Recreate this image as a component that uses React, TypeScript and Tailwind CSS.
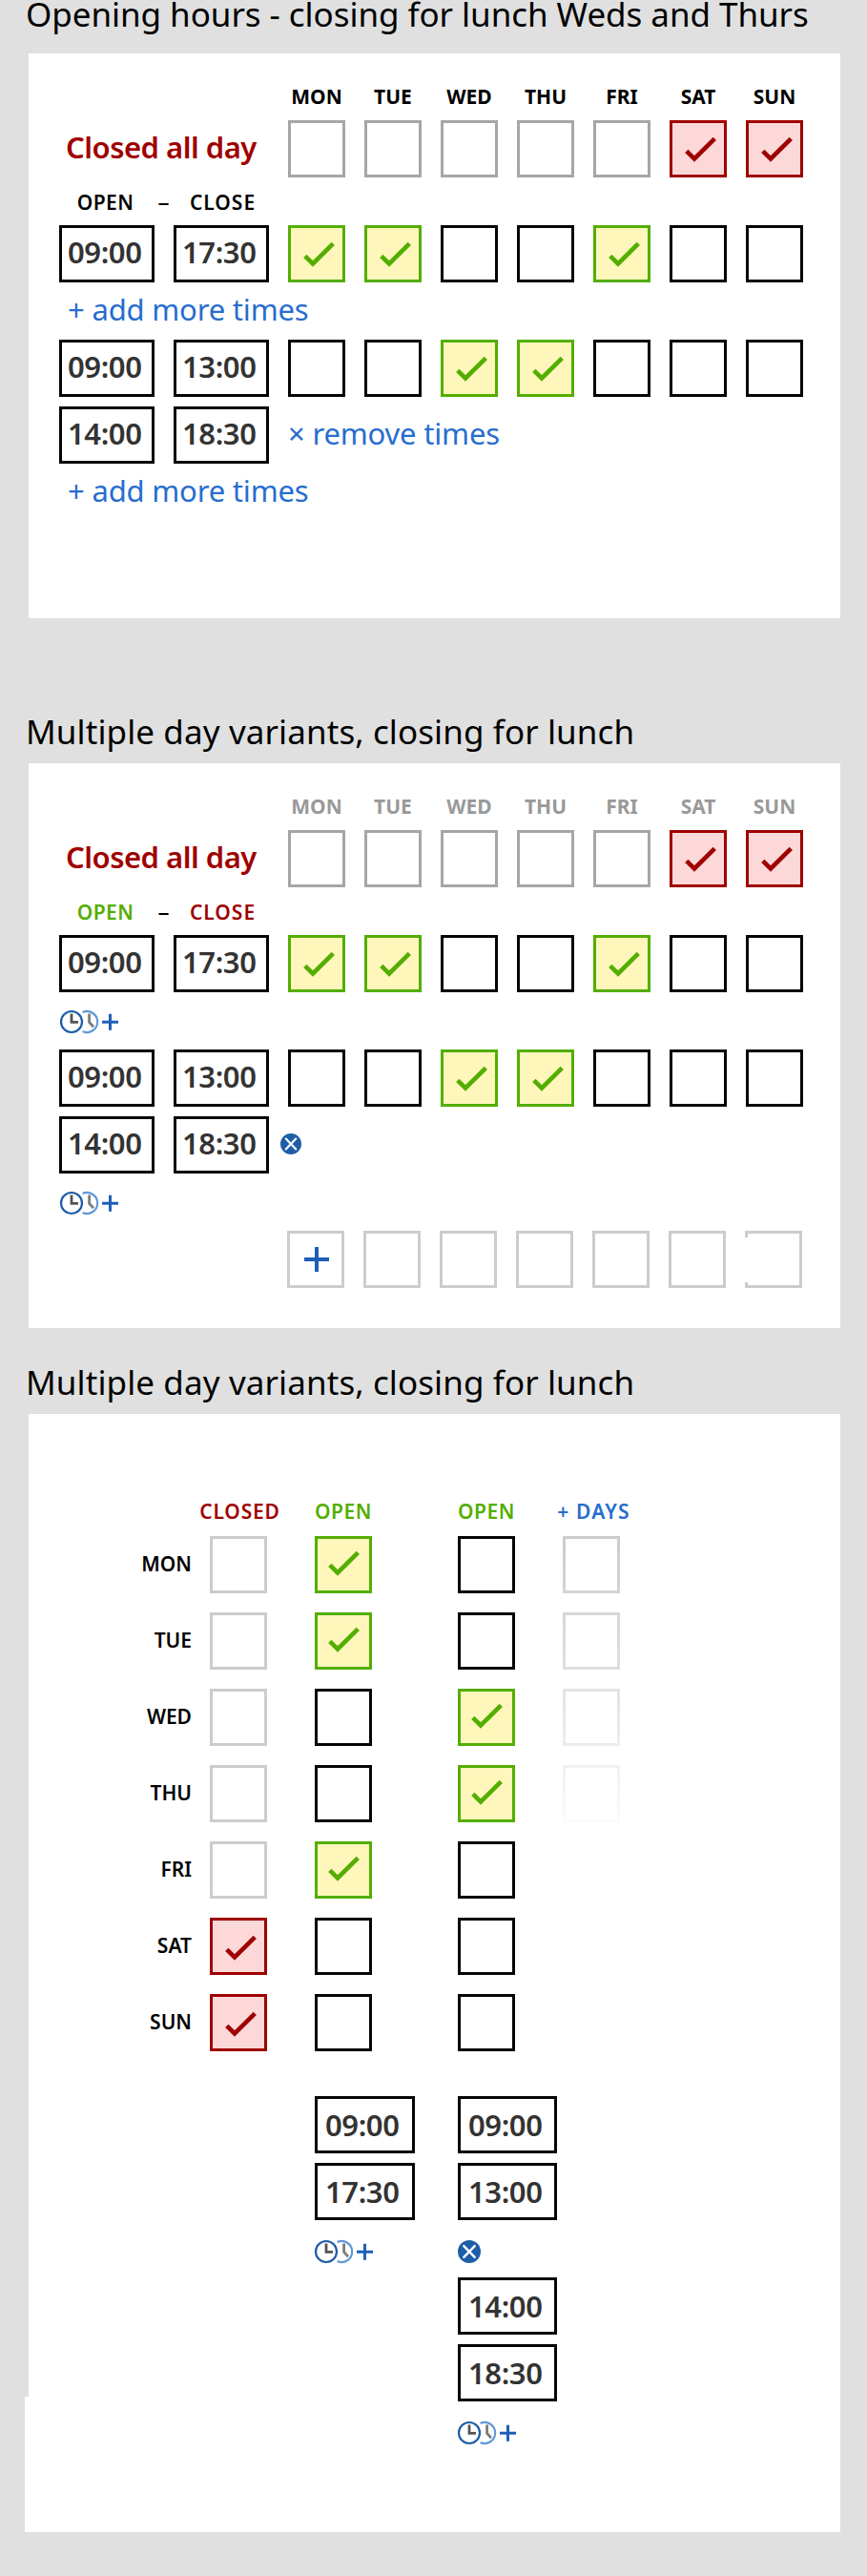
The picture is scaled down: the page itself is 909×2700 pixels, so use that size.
import type { ReactNode } from "react";
import clsx from "clsx";

type Tone = "open" | "closed" | "empty" | "muted" | "faint";

const DAYS = ["MON", "TUE", "WED", "THU", "FRI", "SAT", "SUN"];

const boxTone: Record<Tone, string> = {
  open: "border-[#53ae00] bg-[#fef6bb] text-[#53ae00]",
  closed: "border-[#9f0000] bg-[#fcd8d8] text-[#9f0000]",
  empty: "border-[#050505]",
  muted: "border-[#a6a6a6]",
  faint: "border-[#cccccc]",
};

function Box({ tone, checkBox = "3 3 54 54", children }: { tone: Tone; checkBox?: string; children?: ReactNode }) {
  return (
    <div className={clsx("flex size-[60px] shrink-0 items-center justify-center border-[3px]", boxTone[tone])}>
      {(tone === "open" || tone === "closed") && (
        <svg viewBox={checkBox} className="size-[54px]" fill="none" stroke="currentColor" strokeWidth="4.7">
          <path d="M17.8 32.3 L26 40.5 L47.3 19.3" />
        </svg>
      )}
      {children}
    </div>
  );
}

function Plus() {
  return (
    <svg viewBox="0 0 26 26" className="ml-[2px] size-[26px]" stroke="#1f5fb8" strokeWidth="4">
      <path d="M13 0 V26 M0 13 H26" />
    </svg>
  );
}

function ClockPlus({ className }: { className?: string }) {
  return (
    <svg viewBox="0 0 64 26" className={clsx("h-[26px] w-[64px] shrink-0", className)} fill="none">
      <circle cx="13" cy="13" r="11" stroke="#1c5ca6" strokeWidth="2.2" />
      <path d="M13 4.5 V13.3 H20" stroke="#555555" strokeWidth="2.8" />
      <path d="M24.6 3 A11 11 0 1 1 24.6 23" stroke="#5e97d6" strokeWidth="2.1" />
      <path d="M31.6 4.5 V13.4 L36 18.2" stroke="#7c7c7c" strokeWidth="2.8" />
      <path d="M45 13.2 H62 M53.5 4.7 V21.7" stroke="#1f5fb8" strokeWidth="3" />
    </svg>
  );
}

function RemoveIcon({ className }: { className?: string }) {
  return (
    <svg viewBox="0 0 24 24" className={clsx("shrink-0", className)} fill="none">
      <circle cx="12" cy="12" r="12" fill="#1d5ea8" />
      <path d="M6.3 6.1 L17.7 17.9 M17.7 6.1 L6.3 17.9" stroke="#ffffff" strokeWidth="2.4" strokeLinecap="round" />
    </svg>
  );
}

function Time({ value, className }: { value: string; className: string }) {
  return (
    <div className={clsx("flex h-[60px] shrink-0 items-center border-[3px] border-[#050505] text-[31px] leading-8 font-semibold tracking-[-0.4px] text-[#333333]", className)}>
      {value}
    </div>
  );
}

function TimePair({ open, close }: { open: string; close: string }) {
  return (
    <div className="flex gap-5">
      <Time value={open} className="w-[100px] pb-[4px] pl-[6px]" />
      <Time value={close} className="w-[100px] pb-[4px] pl-[6px]" />
    </div>
  );
}

function DayBoxes({ tones }: { tones: Tone[] }) {
  return (
    <div className="flex gap-5">
      {tones.map((tone, i) => (
        <Box key={i} tone={tone} />
      ))}
    </div>
  );
}

function Title({ children, className }: { children: ReactNode; className: string }) {
  return <h2 className={clsx("pl-[27px] text-[35px] leading-7 whitespace-nowrap text-black", className)}>{children}</h2>;
}

function Link({ children }: { children: ReactNode }) {
  return <a className="text-[31px] leading-8 tracking-[-0.18px] whitespace-nowrap text-[#276dce]">{children}</a>;
}

function Schedule({ colored, addRow, removeControl, children }: { colored?: boolean; addRow: ReactNode; removeControl: ReactNode; children?: ReactNode }) {
  return (
    <section className="ml-[30px] h-[592px] w-[851px] bg-white pt-[34px] pl-8">
      <div className={clsx("mb-[14px] ml-[240px] flex h-[22px] gap-5 text-[21px] leading-[22px] font-bold", colored ? "text-[#999999]" : "text-black")}>
        {DAYS.map((day) => (
          <span key={day} className="flex w-[60px] justify-center">{day}</span>
        ))}
      </div>
      <div className="flex h-[60px] items-center">
        <span className="w-[240px] pb-[4px] pl-[7px] text-[31px] leading-8 font-semibold tracking-[-0.5px] text-[#9f0000]">Closed all day</span>
        <DayBoxes tones={["muted", "muted", "muted", "muted", "muted", "closed", "closed"]} />
      </div>
      <div className="flex h-[50px] items-center pt-[2px] text-center text-[21px] leading-[22px] font-semibold text-black">
        <span className={clsx("w-[97px] tracking-[0.4px]", colored && "text-[#53ae00]")}>OPEN</span>
        <span className="w-[25px] pb-[2px] text-[24px] font-medium">–</span>
        <span className={clsx("w-[99px] tracking-[1px]", colored && "text-[#9f0000]")}>CLOSE</span>
      </div>
      <div className="flex gap-5">
        <TimePair open="09:00" close="17:30" />
        <DayBoxes tones={["open", "open", "empty", "empty", "open", "empty", "empty"]} />
      </div>
      <div className="flex h-[60px] items-center">{addRow}</div>
      <div className="flex gap-5">
        <TimePair open="09:00" close="13:00" />
        <DayBoxes tones={["empty", "empty", "open", "open", "empty", "empty", "empty"]} />
      </div>
      <div className="mt-[10px] flex items-center">
        <TimePair open="14:00" close="18:30" />
        {removeControl}
      </div>
      <div className="flex h-[60px] items-center">{addRow}</div>
      {children}
    </section>
  );
}

function Column({ heading, headingClass, className, children }: { heading: string; headingClass: string; className: string; children: ReactNode }) {
  return (
    <div className={clsx("w-[60px] shrink-0", className)}>
      <div className={clsx("mb-[15px] flex h-[22px] justify-center text-[21px] leading-[22px] font-semibold whitespace-nowrap", headingClass)}>{heading}</div>
      {children}
    </div>
  );
}

function BoxStack({ tones, checkBox, className }: { tones: Tone[]; checkBox?: string; className?: string }) {
  return (
    <div className={clsx("flex flex-col gap-5", className)}>
      {tones.map((tone, i) => (
        <Box key={i} tone={tone} checkBox={checkBox} />
      ))}
    </div>
  );
}

export default function App() {
  return (
    <main className="h-[2700px] w-[909px] overflow-hidden bg-[#e0e0e0] font-['Noto_Sans',sans-serif]">
      <Title className="h-[56px] pt-px tracking-[-0.05px]">Opening hours - closing for lunch Weds and Thurs</Title>
      <Schedule
        addRow={<div className="pb-[2px] pl-[9px]"><Link>+ add more times</Link></div>}
        removeControl={<div className="pb-[2px] pl-[20px]"><Link>× remove times</Link></div>}
      />

      <Title className="h-[152px] pt-[105px] tracking-[0.1px]">Multiple day variants, closing for lunch</Title>
      <Schedule colored addRow={<ClockPlus className="mt-[2px]" />} removeControl={<RemoveIcon className="mb-[2px] ml-[12px] size-[22px]" />}>
        <div className="ml-[239px] flex gap-5">
          <Box tone="faint"><Plus /></Box>
          {DAYS.slice(1, 6).map((day) => (
            <Box key={day} tone="faint" />
          ))}
          <div className="relative">
            <Box tone="faint" />
            <span className="absolute top-[7px] left-0 h-[47px] w-[3px] bg-white" />
          </div>
        </div>
      </Schedule>

      <Title className="h-[90px] pt-[43px] tracking-[0.1px]">Multiple day variants, closing for lunch</Title>
      <section className="relative ml-[30px] flex h-[1172px] w-[851px] bg-white pt-[91px]">
        <span className="absolute bottom-0 left-[-4px] h-[142px] w-[4px] bg-white" />
        <div className="flex w-[171px] flex-col gap-5 pt-[36px] text-right text-[21px] font-semibold text-black">
          {DAYS.map((day) => (
            <span key={day} className="h-[60px] leading-[60px]">{day}</span>
          ))}
        </div>
        <Column heading="CLOSED" headingClass="pl-[3px] tracking-[0.8px] text-[#9f0000]" className="ml-[19px]">
          <BoxStack tones={["faint", "faint", "faint", "faint", "faint", "closed", "closed"]} checkBox="3 2 54 54" />
        </Column>
        <Column heading="OPEN" headingClass="tracking-[0.5px] text-[#53ae00]" className="ml-[50px]">
          <BoxStack tones={["open", "open", "empty", "empty", "open", "empty", "empty"]} checkBox="5 5 54 54" />
          <div className="mt-[47px] flex flex-col gap-[10px]">
            <Time value="09:00" className="w-[105px] pl-[8px]" />
            <Time value="17:30" className="w-[105px] pl-[8px]" />
          </div>
          <div className="ml-[-1px] flex h-[60px] items-center pt-[6px]"><ClockPlus /></div>
        </Column>
        <Column heading="OPEN" headingClass="tracking-[0.5px] text-[#53ae00]" className="ml-[90px]">
          <BoxStack tones={["empty", "empty", "open", "open", "empty", "empty", "empty"]} checkBox="5 5 54 54" />
          <div className="mt-[47px] flex flex-col gap-[10px]">
            <Time value="09:00" className="w-[104px] pl-[8px]" />
            <Time value="13:00" className="w-[104px] pl-[8px]" />
          </div>
          <div className="flex h-[60px] items-center pt-[6px]"><RemoveIcon className="size-6" /></div>
          <div className="flex flex-col gap-[10px]">
            <Time value="14:00" className="w-[104px] pl-[8px]" />
            <Time value="18:30" className="w-[104px] pl-[8px]" />
          </div>
          <div className="ml-[-1px] flex h-[60px] items-center pt-[6px]"><ClockPlus /></div>
        </Column>
        <Column heading="+ DAYS" headingClass="pl-[5px] tracking-[1.2px] text-[#276dce]" className="ml-[50px]">
          <BoxStack
            tones={["faint", "faint", "faint", "faint"]}
            className="[mask-image:linear-gradient(to_bottom,rgba(0,0,0,1)_0px,rgba(0,0,0,0.63)_140px,rgba(0,0,0,0.08)_300px)]"
          />
        </Column>
      </section>
    </main>
  );
}
